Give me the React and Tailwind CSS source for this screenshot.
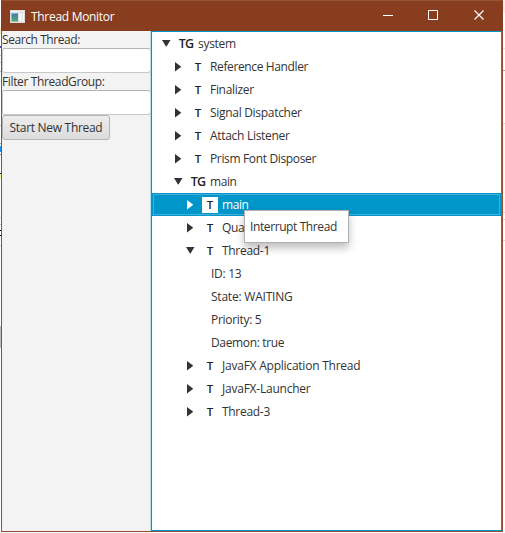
const FONT = "font-['Open_Sans','Noto_Sans',sans-serif]";

const rows = [
  { level: 0, open: true, icon: 'TG', text: 'system', w: 'tracking-[-0.3px]' },
  { level: 1, icon: 'T', text: 'Reference Handler', w: 'tracking-[-0.37px]' },
  { level: 1, icon: 'T', text: 'Finalizer', w: 'tracking-[-0.3px]' },
  { level: 1, icon: 'T', text: 'Signal Dispatcher', w: 'tracking-[-0.3px]' },
  { level: 1, icon: 'T', text: 'Attach Listener', w: 'tracking-[-0.3px]' },
  { level: 1, icon: 'T', text: 'Prism Font Disposer', w: 'tracking-[-0.35px]' },
  { level: 1, open: true, icon: 'TG', text: 'main', w: 'tracking-[-0.4px]' },
  { level: 2, icon: 'T', text: 'main', selected: true, w: 'tracking-[-0.4px]' },
  { level: 2, icon: 'T', text: 'Qua', w: 'tracking-[-0.3px]' },
  { level: 2, open: true, icon: 'T', text: 'Thread-1', w: 'tracking-[-0.3px]' },
  { leaf: true, text: 'ID: 13', w: 'tracking-[-0.3px]' },
  { leaf: true, text: 'State: WAITING', w: 'tracking-[-0.22px]' },
  { leaf: true, text: 'Priority: 5', w: 'tracking-[-0.3px]' },
  { leaf: true, text: 'Daemon: true', w: 'tracking-[-0.35px]' },
  { level: 2, icon: 'T', text: 'JavaFX Application Thread', w: 'tracking-[-0.23px]' },
  { level: 2, icon: 'T', text: 'JavaFX-Launcher', w: 'tracking-[-0.23px]' },
  { level: 2, icon: 'T', text: 'Thread-3', w: 'tracking-[-0.3px]' },
];

const indent = ['pl-[10px]', 'pl-[22px]', 'pl-[34px]'];

// Slivers of the window behind, seen at both sides
const leftEdge = [
  'mt-[28px] h-[6px] bg-[#f8ecc0]',
  'mt-[12px] h-[2px] bg-[#5a4aa8]',
  'mt-[7px] h-px bg-[#c8c8c8]',
  'mt-[6px] h-px bg-[#c8c8c8]',
  'mt-[8px] h-px bg-[#b8b8b8]',
  'mt-[53px] h-px bg-[#c8c8c8]',
  'mt-[17px] h-px bg-[#a0a0a0]',
  'mt-[2px] h-[6px] bg-[#2492e6]',
  'mt-[2px] h-px bg-[#909090]',
  'mt-[18px] h-px bg-[#202020]',
  'h-[5px] bg-[#fbf39a]',
  'mt-[38px] h-px bg-[#d0d0d0]',
  'mt-[6px] h-px bg-[#d0d0d0]',
  'mt-[5px] h-px bg-black',
  'mt-[4px] h-px bg-black',
  'mt-[9px] h-px bg-[#d0d0d0]',
  'mt-[80px] h-[22px] bg-[#bdbdbd]',
];
const rightEdge = [
  'h-[13px] bg-[#f0eef3]',
  'mt-[35px] h-px bg-[#e3e0e4]',
  'mt-[21px] h-px bg-[#a8a4a8]',
  'mt-[52px] h-px bg-[#dad4d8]',
  'h-[88px] bg-[#f8f6f8]',
  'h-px bg-[#dad4d8]',
  'mt-[6px] h-px bg-[#dad4d8]',
  'mt-[20px] h-px bg-[#dad4d8]',
];

function Edge({ parts, className }) {
  return (
    <div className={`flex shrink-0 flex-col ${className}`}>
      {parts.map((part, i) => (
        <div key={i} className={`shrink-0 ${part}`} />
      ))}
    </div>
  );
}

function Arrow({ open, selected }) {
  return (
    <svg width="16" height="23" className={`shrink-0 ${selected ? 'fill-white' : 'fill-[#333]'}`}>
      {open ? <path d="M0 8h8.500L4.500 14.500h-.5z" /> : <path d="M1 7v9.500l6-4.500v-.5z" />}
    </svg>
  );
}

function Row({ level, open, icon, text, selected, leaf, w }) {
  if (leaf) {
    return (
      <div className="flex h-[23px] items-center pt-px pl-[59px]">
        <span className={w}>{text}</span>
      </div>
    );
  }
  const glyph = icon === 'TG' ? 'text-[12.5px] tracking-[-0.7px] pt-px' : 'text-[11.5px] pt-px';
  return (
    <div className={`relative flex h-[23px] items-center ${indent[level]} ${selected ? 'bg-[#0096c9] text-white' : ''}`}>
      {selected && <div className="absolute inset-px border border-[#3fb0d7]" />}
      <Arrow open={open} selected={selected} />
      <span className={`mr-1 flex h-4 w-4 shrink-0 items-center justify-center bg-white font-semibold text-[#222] ${glyph}`}>
        {icon}
      </span>
      <span className={`pt-px ${w}`}>{text}</span>
    </div>
  );
}

function Field() {
  return <input className="block h-[25px] w-[149px] rounded-[3px] border border-[#c8c8c8] border-t-[#b5b5b5] bg-white" />;
}

export default function App() {
  return (
    <div className={`relative flex h-[533px] w-[505px] overflow-hidden bg-white text-[12px] leading-[16px] whitespace-nowrap text-[#333] ${FONT}`}>
      <Edge parts={leftEdge} className="w-px" />
      <div className="flex h-[532px] w-[502px] shrink-0 flex-col border border-t-0 border-[#8f4e35] bg-[#f3f3f3]">
        <header className="-mx-px flex h-[31px] shrink-0 items-center border-t border-[#95543a] bg-[#873d1e] pl-[9px] text-white">
          <svg width="15" height="13" className="mr-[6px]">
            <defs>
              <linearGradient id="pane" x2="0" y2="1">
                <stop stopColor="#3f7fae" />
                <stop offset="1" stopColor="#58a86c" />
              </linearGradient>
            </defs>
            <path d="M0 0h15v13H0z" fill="#d9dde0" />
            <path d="M1 1h13v1H1z" fill="#f5f6f7" />
            <path d="M1.500 3.500h6.500v8H1.500z" fill="url(#pane)" />
            <path d="M9 3h2.500v8.500H9zM12.500 3h1.500v8.500h-1.500z" fill="#f8f8f8" />
          </svg>
          <span className="pt-px tracking-[-0.3px]">Thread Monitor</span>
          <svg width="105" height="12" className="mr-[15px] ml-auto" fill="none" stroke="white">
            <path d="M0 5.500h10M45.500 .5h9v9h-9z" />
            <path d="M91.500 .5l9 9M100.500 .5l-9 9" strokeWidth="1.200" />
          </svg>
        </header>
        <main className="flex min-h-0 flex-1">
          <aside className="flex w-[149px] shrink-0 flex-col items-start">
            <label className="h-[17px] pt-px tracking-[-0.42px]">Search Thread:</label>
            <Field />
            <label className="h-[17px] pt-px tracking-[-0.37px]">Filter ThreadGroup:</label>
            <Field />
            <button className="h-[25px] w-[108px] rounded-[3px] border border-[#b5b5b5] bg-linear-to-b from-[#ededed] to-[#dcdcdc] pt-px tracking-[-0.3px]">
              Start New Thread
            </button>
          </aside>
          <section className="flex-1 border border-[#0096c9] bg-white shadow-[-1px_0_0_#b5dce9]">
            {rows.map((row, i) => (
              <Row key={i} {...row} />
            ))}
          </section>
        </main>
      </div>
      <Edge parts={rightEdge} className="w-[2px]" />
      <div className="absolute top-[210px] left-[244px] flex h-[33px] w-[105px] items-center border border-[#b0b0b0] bg-white pt-px pl-[5px] tracking-[-0.4px] shadow-[0_5px_8px_rgba(0,0,0,0.25)]">
        Interrupt Thread
      </div>
    </div>
  );
}
